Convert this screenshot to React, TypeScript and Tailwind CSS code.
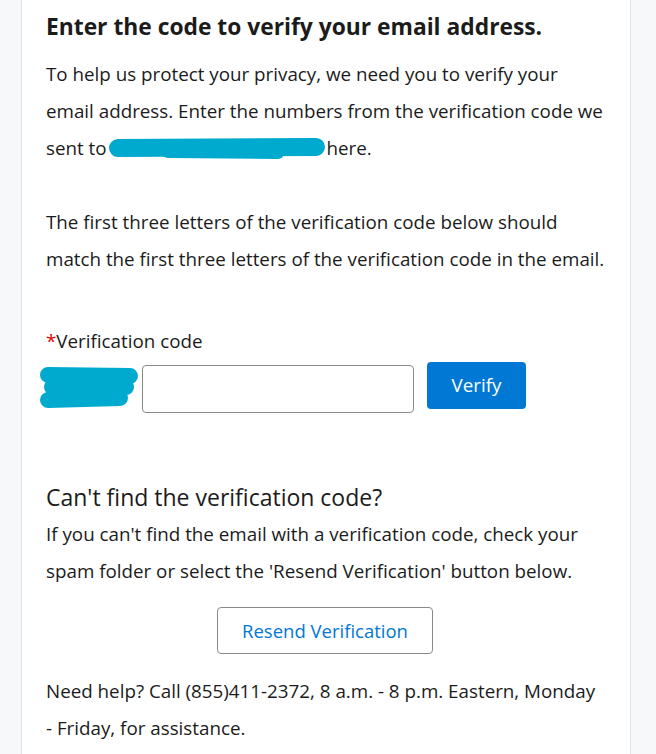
import { useState } from 'react';

const font = { fontFamily: '"Open Sans", "Noto Sans", sans-serif' };

function InlineBlob() {
  return (
    <svg width="218" height="22" viewBox="0 0 218 22" className="inline-block align-middle -mt-[2px] -ml-[3px]">
      <path d="M10 10 L208 9" stroke="#00a9ce" strokeWidth="18" strokeLinecap="round" />
      <path d="M60 14 L170 15" stroke="#00a9ce" strokeWidth="12" strokeLinecap="round" />
    </svg>
  );
}

function CodeBlob() {
  return (
    <svg width="102" height="46" viewBox="0 0 102 46" className="shrink-0">
      <path d="M10 10 L92 11" stroke="#00a9ce" strokeWidth="16" strokeLinecap="round" />
      <path d="M14 22 L88 22" stroke="#00a9ce" strokeWidth="16" strokeLinecap="round" />
      <path d="M10 35 L82 33" stroke="#00a9ce" strokeWidth="16" strokeLinecap="round" />
    </svg>
  );
}

export default function App() {
  const [code, setCode] = useState('');

  return (
    <div className="min-h-screen bg-[#f7f8fa]" style={font}>
      <div className="ml-[21px] mr-[25px] min-h-screen bg-white border-x border-[#dfe2e6] px-[24px] pt-[13px] text-[#1b1b1b]">
        {/* Header */}
        <h1 className="text-[22.8px] font-bold leading-[28px]">Enter the code to verify your email address.</h1>

        <p className="mt-[15px] text-[18.8px] leading-[37px]">
          To help us protect your privacy, we need you to verify your
          <br />
          email address. Enter the numbers from the verification code we
          <br />
          sent to <InlineBlob />here.
        </p>

        <p className="mt-[37px] text-[18.8px] leading-[37px]">
          The first three letters of the verification code below should
          <br />
          match the first three letters of the verification code in the email.
        </p>

        {/* Code input */}
        <label className="mt-[51px] block text-[18.8px] leading-[24px]">
          <span className="text-[#e00000]">*</span>Verification code
        </label>
        <div className="mt-[9px] -ml-[8px] flex items-start">
          <div className="mt-[3px]">
            <CodeBlob />
          </div>
          <input
            value={code}
            onChange={e => setCode(e.target.value)}
            className="ml-[2px] mt-[3px] h-[48px] w-[272px] rounded-[4px] border border-[#8a8a8a] px-3 text-[18px] outline-none"
          />
          <button className="ml-[13px] h-[47px] w-[99px] rounded-[4px] bg-[#0078d4] text-[18.8px] text-white">
            Verify
          </button>
        </div>

        {/* Resend */}
        <h2 className="mt-[69px] text-[23px] leading-[30px]">Can't find the verification code?</h2>
        <p className="mt-[4px] text-[18.8px] leading-[37px]">
          If you can't find the email with a verification code, check your
          <br />
          spam folder or select the 'Resend Verification' button below.
        </p>
        <div className="mt-[17px] flex justify-center">
          <button className="-ml-[2px] h-[47px] w-[216px] rounded-[4px] border border-[#8a8a8a] bg-white text-[18.5px] text-[#0078d4]">
            Resend Verification
          </button>
        </div>

        <p className="mt-[19px] text-[18.8px] leading-[37px]">
          Need help? Call (855)411-2372, 8 a.m. - 8 p.m. Eastern, Monday
          <br />- Friday, for assistance.
        </p>
      </div>
    </div>
  );
}
